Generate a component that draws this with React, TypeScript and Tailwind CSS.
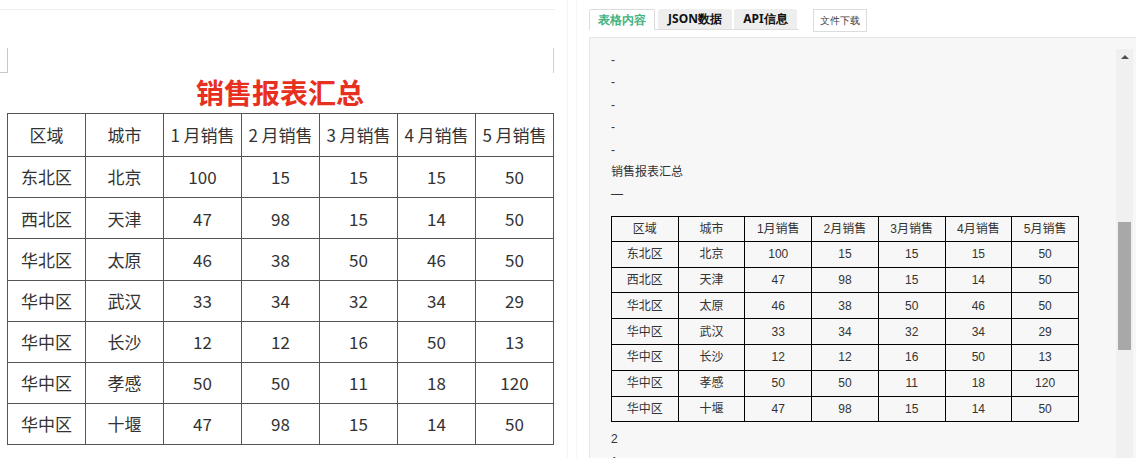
import React from 'react'

const headers = ['区域', '城市', '1月销售', '2月销售', '3月销售', '4月销售', '5月销售']
const rows = [
  ['东北区', '北京', '100', '15', '15', '15', '50'],
  ['西北区', '天津', '47', '98', '15', '14', '50'],
  ['华北区', '太原', '46', '38', '50', '46', '50'],
  ['华中区', '武汉', '33', '34', '32', '34', '29'],
  ['华中区', '长沙', '12', '12', '16', '50', '13'],
  ['华中区', '孝感', '50', '50', '11', '18', '120'],
  ['华中区', '十堰', '47', '98', '15', '14', '50'],
]

const cjk = "font-['Noto_Sans_CJK_SC',sans-serif]"
const ui = "font-['Liberation_Sans','Noto_Sans_CJK_SC',sans-serif]"

function DocPreview() {
  return (
    <div className={`w-[568px] shrink-0 border-r border-[#f3f3f3] bg-white ${cjk}`}>
      <div className="mt-[9px] h-px w-[555px] bg-[#efefef]" />
      <div className="mt-[38px] flex h-[25px] w-[555px] justify-between">
        <div className="w-[8px] border-r border-b border-[#c8c8c8]" />
        <div className="w-px bg-[#d0d0d0] mr-[1px]" />
      </div>
      <h1 className="mt-0 w-[560px] text-center text-[28px] font-bold leading-[38px] text-[#e8301f]">
        销售报表汇总
      </h1>
      <table className="ml-[7px] mt-[2px] w-[547px] table-fixed border-collapse border-[1.5px] border-[#555] text-center text-[17px] text-[#333]">
        <thead>
          <tr className="h-[43px]">
            {headers.map((h) => (
              <td key={h} className="border-[1.5px] border-[#555] px-0 font-normal">
                {h.replace('月', ' 月')}
              </td>
            ))}
          </tr>
        </thead>
        <tbody>
          {rows.map((r, i) => (
            <tr key={i} className="h-[41.2px]">
              {r.map((c, j) => (
                <td key={j} className="border-[1.5px] border-[#555] px-0">
                  {c}
                </td>
              ))}
            </tr>
          ))}
        </tbody>
      </table>
    </div>
  )
}

function Tabs() {
  return (
    <div className="flex items-start pt-[9px]">
      <div className="flex h-[21px] items-end border-b border-[#dcdcdc]">
        <button className="-mb-px h-[21px] w-[66px] rounded-t-[2px] border border-b-0 border-[#dcdcdc] bg-white text-[12px] font-bold text-[#45b382]">
          表格内容
        </button>
        <button className="ml-[3px] h-[20px] w-[74px] rounded-t-[3px] bg-[#eeeeee] text-[12px] font-bold text-[#111]">
          JSON数据
        </button>
        <button className="ml-[2px] mr-[2px] h-[20px] w-[63px] rounded-t-[3px] bg-[#eeeeee] text-[12px] font-bold text-[#111]">
          API信息
        </button>
      </div>
      <button className="ml-[14px] h-[23px] w-[54px] border border-[#dcdcdc] bg-white text-[10px] text-[#444]">
        文件下载
      </button>
    </div>
  )
}

function Scrollbar() {
  return (
    <div className="mr-[3px] mt-[11px] flex w-[17px] shrink-0 flex-col items-center bg-[#f0f0f0]">
      <div className="flex h-[16px] w-full items-center justify-center">
        <div className="h-0 w-0 border-x-[4px] border-b-[4px] border-x-transparent border-b-[#505050]" />
      </div>
      <div className="mt-[157px] h-[128px] w-[13px] bg-[#a8a8a8]" />
    </div>
  )
}

function ContentPanel() {
  return (
    <div className="mt-[5px] flex flex-1 overflow-hidden border-l border-t border-[#e6e6e6] bg-[#f7f7f7]">
      <div className={`flex-1 pl-[21px] pt-[11px] text-[12px] leading-[22.4px] text-[#333] ${ui}`}>
        <p>-</p>
        <p>-</p>
        <p>-</p>
        <p>-</p>
        <p>-</p>
        <p>销售报表汇总</p>
        <p>—</p>
        <table className="mt-[10px] w-[468px] table-fixed border-collapse text-center leading-normal">
          <tbody>
            <tr className="h-[25px]">
              {headers.map((h) => (
                <td key={h} className="border border-black">{h}</td>
              ))}
            </tr>
            {rows.map((r, i) => (
              <tr key={i} className="h-[25.8px]">
                {r.map((c, j) => (
                  <td key={j} className="border border-black">{c}</td>
                ))}
              </tr>
            ))}
          </tbody>
        </table>
        <p className="mt-[6px]">2</p>
        <p>1</p>
      </div>
      <Scrollbar />
    </div>
  )
}

export default function App() {
  return (
    <div className="flex h-[458px] w-[1136px] overflow-hidden bg-white">
      <DocPreview />
      <div className="w-[9px] shrink-0 border-r border-[#f5f5f5]" />
      <div className="flex min-w-0 flex-1 flex-col pl-[12px]">
        <Tabs />
        <ContentPanel />
      </div>
    </div>
  )
}
